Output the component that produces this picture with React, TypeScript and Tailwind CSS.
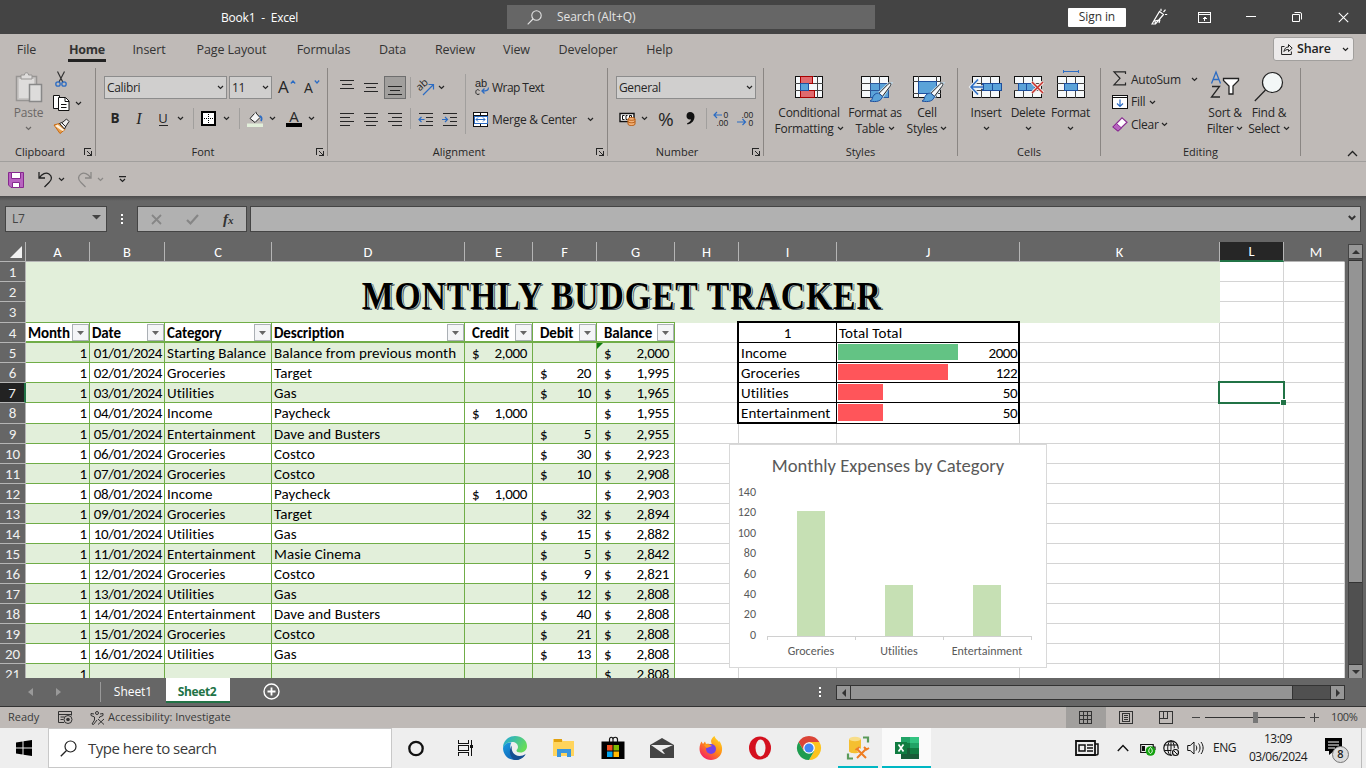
import React from "react";

type Kids = { children?: React.ReactNode };

/* ---------- small shared pieces ---------- */

function Ico({ w, h, className = "", crisp = false, children }: Kids & { w: number; h: number; className?: string; crisp?: boolean }) {
  return (
    <svg width={w} height={h} viewBox={`0 0 ${w} ${h}`} fill="none" className={`block shrink-0 overflow-visible ${className}`} shapeRendering={crisp ? "crispEdges" : "auto"}>
      {children}
    </svg>
  );
}

function Chev({ className = "" }: { className?: string }) {
  return (
    <Ico w={7} h={5} className={className}>
      <path d="M1 1l2.500 2.500L6 1" stroke="currentColor" strokeWidth="1.200" />
    </Ico>
  );
}

function Launcher() {
  return (
    <Ico w={9} h={9} crisp className="text-[#262626]">
      <path d="M0.500 7V0.500H7" stroke="currentColor" />
      <path d="M3 3l4 4" stroke="currentColor" shapeRendering="auto" />
      <path d="M3 7.500h4.500V3" stroke="currentColor" />
    </Ico>
  );
}

function Lines({ rows }: { rows: [number, number, number][] }) {
  return (
    <Ico w={16} h={16} crisp>
      {rows.map(([y, a, b]) => (
        <path key={y} d={`M${a} ${y + 0.5}H${b}`} stroke="#262626" />
      ))}
    </Ico>
  );
}

function Group({ w, label, labelPad = "", launcher = false, children }: Kids & { w: string; label: string; labelPad?: string; launcher?: boolean }) {
  return (
    <section className={`${w} flex h-[88px] shrink-0 flex-col border-r border-[#8a8683]`}>
      <div className="h-[76px]">{children}</div>
      <div className="flex h-[14px] items-center">
        <div className={`grow pt-[5px] text-center text-[11px] leading-[14px] ${labelPad}`}>{label}</div>
        {launcher && (
          <div className="-ml-3 mr-[2px] mt-[6px]">
            <Launcher />
          </div>
        )}
      </div>
    </section>
  );
}

function Combo({ w, children }: Kids & { w: string }) {
  return (
    <div className={`${w} flex h-[23px] shrink-0 items-center justify-between border border-[#8c8c8c] bg-[#d0cfce] pl-[2px] pr-[2px] text-[12px] tracking-[-0.35px] text-[#262626]`}>
      <span>{children}</span>
      <Chev />
    </div>
  );
}

function Slot({ w, children }: Kids & { w: string }) {
  return <div className={`${w} flex shrink-0 items-center justify-center`}>{children}</div>;
}

function Big({ w, icon, a, b, dim = false }: { w: string; icon: React.ReactNode; a: string; b?: string; dim?: boolean }) {
  return (
    <div className={`${w} flex shrink-0 flex-col items-center whitespace-nowrap text-[12px] tracking-[-0.25px] ${dim ? "text-[#6b6866]" : ""}`}>
      <div className="flex h-[37px] items-center justify-center">{icon}</div>
      <div className="h-[16px] leading-[16px]">{a}</div>
      <div className="flex h-[16px] items-center gap-[3px] leading-[16px]">
        {b && <span>{b}</span>}
        <Chev className="-mt-px" />
      </div>
    </div>
  );
}

/* ---------- title bar and tabs ---------- */

function TitleBar() {
  return (
    <header className="flex h-[34px] items-center bg-[#444444] text-[12px] text-white">
      <div className="w-[507px] pl-[221px] pt-px text-[12px] tracking-[-0.2px]">
        <span className="whitespace-pre">Book1  -  Excel</span>
      </div>
      <div className="flex h-6 w-[368px] items-center bg-[#666666] pl-5 text-[#e3e3e3]">
        <Ico w={15} h={15}>
          <circle cx="9.500" cy="5.500" r="4.700" stroke="#e3e3e3" strokeWidth="1.100" />
          <path d="M6 9L0.700 14.300" stroke="#e3e3e3" strokeWidth="1.100" />
        </Ico>
        <span className="ml-[15px] tracking-[-0.05px]">Search (Alt+Q)</span>
      </div>
      <div className="ml-[193px] flex h-[19px] w-[58px] items-center justify-center rounded-[1px] bg-white text-[12px] tracking-[-0.1px] text-[#333]">Sign in</div>
      <Ico w={18} h={18} className="ml-[24px]">
        <path d="M2 16L9.500 3.500l4 3L5.500 16zM5.500 16l-.5-3 4-1M9 15l1-3.500" stroke="white" strokeWidth="1.200" />
        <path d="M11 3V.8M13.500 4l2-2.400M15 6.500h2.200" stroke="white" strokeWidth="1.200" />
      </Ico>
      <Ico w={13} h={11} crisp className="ml-[30px]">
        <path d="M.5.5h12v10H.5zM0 2.500h13M6.500 9V5M4.500 6.500h4M5.500 5.500h2" stroke="white" />
      </Ico>
      <Ico w={10} h={10} crisp className="ml-[35px]"><path d="M0 4.500h10" stroke="white" /></Ico>
      <Ico w={10} h={10} className="ml-[36px]">
        <path d="M.5 2.500h7v7h-7z" stroke="white" />
        <path d="M2.500.5H8A1.500 1.500 0 0 1 9.500 2v5.500" stroke="white" />
      </Ico>
      <Ico w={11} h={11} className="ml-[36px]"><path d="M.8.8l9.400 9.400M10.200.8L.8 10.200" stroke="white" strokeWidth="1.100" /></Ico>
    </header>
  );
}

const TABS: [string, string][] = [
  ["File", "ml-[17px] w-[19px]"],
  ["Home", "ml-[32px] w-[38px]"],
  ["Insert", "ml-[27px] w-[32px]"],
  ["Page Layout", "ml-[31px] w-[71px]"],
  ["Formulas", "ml-[30px] w-[53px]"],
  ["Data", "ml-[29px] w-[27px]"],
  ["Review", "ml-[29px] w-[40px]"],
  ["View", "ml-[28px] w-[27px]"],
  ["Developer", "ml-[28px] w-[60px]"],
  ["Help", "ml-[28px] w-[27px]"],
];

function Tabs() {
  return (
    <nav className="flex h-[32px] text-[12.500px] text-[#333]">
      {TABS.map(([t, m]) => (
        <div key={t} className={`${m} flex h-[28px] shrink-0 items-center justify-center whitespace-nowrap ${t === "Home" ? "border-b-[3px] border-[#222] pt-[7px] font-bold tracking-[-0.3px]" : "pt-[4px] tracking-[-0.1px]"}`}>
          {t}
        </div>
      ))}
      <div className="ml-[600px] mt-[3px] flex h-6 w-[81px] shrink-0 items-center rounded-[3px] border border-[#a19f9d] bg-[#eceaea] pl-[7px] text-[#222]">
        <Ico w={12} h={12}>
          <path d="M3.500 3.500H.6v8h9.800V8.500M3 8.500c.3-3 2-4.500 4.500-4.500V1.500l3.700 3.700-3.700 3.300V6.500C5.500 6.500 4 7 3 8.500z" stroke="#222" />
        </Ico>
        <span className="ml-[4px] pt-px font-semibold tracking-[-0.2px]">Share</span>
        <Chev className="ml-[11px]" />
      </div>
    </nav>
  );
}

/* ---------- ribbon icons ---------- */

const dark = "#262626";
const blue = "#2b6cc4";

function GridIcon({ kind }: { kind: "cond" | "table" | "cell" | "insert" | "delete" | "format" }) {
  return (
    <Ico w={34} h={32}>
      <g shapeRendering="crispEdges">
        <path d="M3.500 5.500h27v21h-27z" fill="#f5f8fa" stroke="#111" />
        {kind !== "cell" && <path d="M3 12.500h28M3 19.500h28M12.500 5v22M21.500 5v22" stroke="#444" />}
        {kind === "cell" && <path d="M3 10.500h28M8.500 5v22M26.500 5v22M3 22.500h28" stroke="#444" />}
      </g>
      {kind === "cond" && (
        <g shapeRendering="crispEdges">
          <path d="M9 6h16v20H9z" fill="#f5f8fa" />
          <path d="M17 12.500h9M17 19.500h9M25.500 5v22M8.500 5v22" stroke="#444" />
          <path d="M8.500 5.500h12v7h-12zM8.500 19.500h14v7h-14z" fill="#e06a6e" stroke="#a80000" />
          <path d="M8.500 12.500h8v7h-8z" fill="#5ba3d9" stroke="#2050a0" />
        </g>
      )}
      {kind === "table" && <path d="M12.500 12.500h18v14h-18zM12.500 19.500h18M21.500 12.500v14" fill="#5ba3d9" stroke="#2b579a" shapeRendering="crispEdges" />}
      {kind === "cell" && <path d="M8.500 10.500h18v12h-18z" fill="#5ba3d9" stroke="#1d4f9e" shapeRendering="crispEdges" />}
      {(kind === "table" || kind === "cell") && (
        <g>
          <path d="M33 12.500l-9 14-4-3.500 11-10.500z" stroke="#bfd8ea" strokeWidth="2.500" />
          <path d="M32.500 12.300c.8.5.3 1.700-.5 3l-7.500 10-3.500-3 9-9c1-1 1.900-1.400 2.500-1z" fill="#f5f8fa" stroke="#222" />
          <path d="M20.500 22l4 3.500c-1 4.500-6 6-12.500 4.500 2.500-.8 2-2.500 3-4.500s3-3.500 5.500-3.500z" fill="#5ba3d9" stroke="#1d4f9e" />
        </g>
      )}
      {kind === "insert" && (
        <g>
          <path d="M13.500 12.500h19v7h-19zM14.500 12.500v7M23.500 12.500v7" fill="#5ba3d9" stroke="#1d4f9e" shapeRendering="crispEdges" />
          <path d="M9 8.500l-7 7.500 7 7.500M2 16h12" stroke="#e8eef2" strokeWidth="3.500" />
          <path d="M14 16H2M9 8.500L2 16l7 7.500" stroke={blue} strokeWidth="1.500" />
        </g>
      )}
      {kind === "delete" && (
        <g>
          <path d="M2 13h6v6H2z" fill="#bfbab7" />
          <path d="M7.500 12.500h16v7h-16zM15.500 12.500v7" fill="#5ba3d9" stroke="#1d4f9e" shapeRendering="crispEdges" />
          <path d="M21 11l11 11M32 11L21 22" stroke="#eee6e4" strokeWidth="3.500" />
          <path d="M21 11l11 11M32 11L21 22" stroke="#c9302c" strokeWidth="1.500" />
        </g>
      )}
      {kind === "format" && (
        <g shapeRendering="crispEdges">
          <path d="M10.500 12.500h13v7h-13z" fill="#5ba3d9" stroke="#1d4f9e" />
          <path d="M9.500 -1v3M24.500 -1v3M9 .5h16" stroke={blue} />
        </g>
      )}
    </Ico>
  );
}

/* ---------- ribbon ---------- */

function Clipboard() {
  return (
    <Group w="w-[96px]" label="Clipboard" labelPad="pr-[16px]" launcher>
      <div className="flex pl-[4px]">
        <Big
          w="w-[49px]"
          a="Paste"
          dim
          icon={
            <Ico w={28} h={31}>
              <path d="M1.500 5.500h20v24h-20z" fill="#c8c6c4" stroke="#979593" strokeWidth="1.500" />
              <path d="M4 8h15v19H4z" fill="#dedcdb" />
              <path d="M6 8V4h3.500C9 1 14 1 13.500 4H17v4z" fill="#dedcdb" stroke="#979593" />
              <path d="M14.500 13.500h12v17h-12z" fill="#dddcdb" stroke="#888" strokeWidth="1.500" />
            </Ico>
          }
        />
        <div className="flex flex-col gap-[8px] pt-[3px]">
          <Ico w={16} h={16}>
            <path d="M4.500.5l5.500 11M11.500.5L6 11" stroke="#333" strokeWidth="1.200" />
            <circle cx="5" cy="13" r="2.200" stroke={blue} strokeWidth="1.300" />
            <circle cx="11" cy="13" r="2.200" stroke={blue} strokeWidth="1.300" />
          </Ico>
          <div className="flex items-center gap-[5px]">
            <Ico w={17} h={17}>
              <path d="M.5.5h6v13h-6z" fill="#fff" stroke="#111" />
              <path d="M5.500 2.500h7l3.500 3.500v9.500H5.500z" fill="#fff" stroke="#111" />
              <path d="M12 2.500V6.500h4M8 9.500h5.500M8 12.500h5.500" stroke="#111" />
            </Ico>
            <Chev />
          </div>
          <Ico w={17} h={16} className="-mt-[2px]">
            <path d="M1 7l5.500-1.500 5.500 6-5 4z" fill="#e8a050" stroke="#c96a10" />
            <path d="M4.500 6.500l7 5.500-2 1-7.500-5z" fill="#fff3e0" />
            <path d="M6.500 5.500l5 5.500 1.500-3L16 3.500l-2.500-2.500L10 4z" fill="#eee" stroke="#222" />
            <path d="M9 5l4 4" stroke="#222" />
          </Ico>
        </div>
      </div>
    </Group>
  );
}

function VSep() {
  return <div className="h-[21px] w-px shrink-0 bg-[#a19f9d]" />;
}

function FontGroup() {
  return (
    <Group w="w-[232px]" label="Font" labelPad="pr-[18px]" launcher>
      <div className="flex items-center pl-[8px] pt-[8px]">
        <Combo w="w-[123px]">Calibri</Combo>
        <div className="w-[2px]" />
        <Combo w="w-[43px]">11</Combo>
        <span className="-mt-[2px] ml-[6px] w-[12px] text-[17px] leading-[22px]">A</span>
        <Ico w={6} h={4} className="-mt-[11px]"><path d="M.8 3.500L3 1l2.200 2.500" stroke={blue} strokeWidth="1.200" /></Ico>
        <span className="ml-[8px] w-[10px] text-[14px] leading-[21px]">A</span>
        <Ico w={6} h={4} className="-mt-[11px]"><path d="M.8.5L3 3 5.200.5" stroke={blue} strokeWidth="1.200" /></Ico>
      </div>
      <div className="mt-[9px] flex h-[21px] items-center pl-[7px] pt-0">
        <Slot w="w-[24px]"><b className="text-[13.500px]">B</b></Slot>
        <Slot w="w-[24px]"><i className="font-['Liberation_Serif',serif] text-[16px]">I</i></Slot>
        <Slot w="w-[24px]"><span className="flex h-[15px] w-[9px] justify-center border-b border-[#262626] text-[13px] leading-[14px]">U</span></Slot>
        <Slot w="w-[11px]"><Chev /></Slot>
        <div className="w-[7px]" />
        <VSep />
        <div className="w-[7px]" />
        <Ico w={15} h={15} crisp>
          <path d="M1 1h13v13H1z" fill="#fff" stroke="#000" strokeWidth="2" />
          <path d="M7.500 3v9M3 7.500h9" stroke="#000" strokeDasharray="1 1" />
        </Ico>
        <div className="w-[7px]" />
        <Chev />
        <div className="w-[9px]" />
        <VSep />
        <div className="w-[7px]" />
        <Ico w={17} h={16}>
          <path d="M0 12.500h16v3.500H0z" fill="#e2efda" />
          <path d="M7.500 2.500L3 7.500l5 4 5-5-4-4.500V.8" fill="#f5f5f5" stroke="#222" />
          <path d="M12.500 5c2.500.5 2.500 3 1.500 5" stroke={blue} strokeWidth="1.800" />
        </Ico>
        <Chev className="ml-[5px]" />
        <div className="ml-[10px] flex w-[16px] flex-col items-center">
          <span className="h-[12px] text-[15px] leading-[11px]">A</span>
          <div className="h-[4px] w-[16px] bg-black" />
        </div>
        <Chev className="ml-[6px]" />
      </div>
    </Group>
  );
}

function Alignment() {
  return (
    <Group w="w-[280px]" label="Alignment" labelPad="pr-[18px]" launcher>
      <div className="flex">
        <div className="pl-[7px]">
          <div className="mt-[8px] flex h-[23px] items-center">
            <Slot w="w-[24px]"><Lines rows={[[0, 1, 15], [4, 3, 13], [8, 1, 15]]} /></Slot>
            <Slot w="w-[24px]"><Lines rows={[[3, 1, 15], [7, 3, 13], [11, 1, 15]]} /></Slot>
            <Slot w="w-[24px]">
              <div className="flex h-[23px] w-[22px] items-center justify-center border border-[#6e6e6e] bg-[#a19f9d]">
                <Lines rows={[[6, 1, 15], [10, 3, 13], [14, 1, 15]]} />
              </div>
            </Slot>
            <div className="w-[3px]" />
            <VSep />
            <div className="ml-[7px]">
              <Ico w={17} h={17}>
                <text x="0" y="10" fontSize="10.500" fill={dark} fontFamily="Open Sans" transform="rotate(-42 4 9)">ab</text>
                <path d="M5 16L15 6M10.500 5.500H15.500V10.500" stroke={blue} strokeWidth="1.200" />
              </Ico>
            </div>
            <Chev className="ml-[3px]" />
          </div>
          <div className="mt-[9px] flex h-[21px] items-center">
            <Slot w="w-[24px]"><Lines rows={[[2, 1, 15], [6, 1, 11], [10, 1, 15], [14, 1, 11]]} /></Slot>
            <Slot w="w-[24px]"><Lines rows={[[2, 1, 15], [6, 3, 13], [10, 1, 15], [14, 3, 13]]} /></Slot>
            <Slot w="w-[24px]"><Lines rows={[[2, 1, 15], [6, 5, 15], [10, 1, 15], [14, 5, 15]]} /></Slot>
            <div className="w-[3px]" />
            <VSep />
            <div className="ml-[7px] flex gap-[8px]">
              <Ico w={16} h={14}>
                <path d="M1 1.500h14M8 5.500h7M8 9.500h7M1 13.500h14" stroke={dark} shapeRendering="crispEdges" />
                <path d="M6.500 7.500H1M3.500 5L1 7.500 3.500 10" stroke={blue} strokeWidth="1.200" />
              </Ico>
              <Ico w={16} h={14}>
                <path d="M1 1.500h14M8 5.500h7M8 9.500h7M1 13.500h14" stroke={dark} shapeRendering="crispEdges" />
                <path d="M0 7.500h5.500M3 5l2.500 2.500L3 10" stroke={blue} strokeWidth="1.200" />
              </Ico>
            </div>
          </div>
        </div>
        <div className="ml-[7px] mt-[6px] h-[60px] w-px bg-[#a19f9d]" />
        <div className="flex flex-col whitespace-nowrap pl-[7px] text-[12px] tracking-[-0.3px]">
          <div className="mt-[8px] flex h-[23px] items-center gap-[2px] pl-[2px] tracking-[-0.55px]">
            <Ico w={15} h={17}>
              <text x="0" y="7.500" fontSize="11" fill={dark} fontFamily="Liberation Sans" letterSpacing="0">ab</text>
              <path d="M4.500 11.500C2 9.500.8 11.500.8 13.200s1.500 3 3.700 1.800" stroke={dark} />
              <path d="M13.500 8.500c0 3-2 3.500-6.500 3.500M9.500 9.500L7 12l2.500 2.500" stroke={blue} strokeWidth="1.300" />
            </Ico>
            Wrap Text
          </div>
          <div className="mt-[10px] flex h-[21px] items-center gap-[4px] tracking-[-0.25px]">
            <Ico w={15} h={15} crisp className="-mt-px">
              <path d="M.5.5h14v14H.5zM.5 3.500h14M.5 11.500h14M7.500.5v3M7.500 11.500v3" fill="#fff" stroke="#111" />
              <path d="M1 4h13v7H1z" fill="#fff" stroke={blue} />
              <path d="M3 7.500h9M5 5.500L3 7.500l2 2M10 5.500l2 2-2 2" stroke={blue} shapeRendering="auto" />
            </Ico>
            Merge &amp; Center
            <Chev className="ml-[6px]" />
          </div>
        </div>
      </div>
    </Group>
  );
}

function NumberGroup() {
  return (
    <Group w="w-[156px]" label="Number" labelPad="pr-[18px]" launcher>
      <div className="pl-[8px] pt-[8px]"><Combo w="w-[140px]">General</Combo></div>
      <div className="mt-[9px] flex h-[21px] items-center pl-[11px]">
        <Ico w={17} h={15}>
          <path d="M1 2.500h14v8H1z" fill="#fff" stroke="#111" strokeWidth="1.400" />
          <path d="M5.500 4.500H3.500v4h2M8.500 4.500H7v4h1.500M10.500 8v-3.500h2V8" stroke="#111" />
          <path d="M9 8c0-2 7-2 7 0v5c0 2-7 2-7 0z" fill="#f3b27a" stroke="#b55a10" />
          <path d="M9 8c0 1.700 7 1.700 7 0M9 10.500c0 1.700 7 1.700 7 0" stroke="#b55a10" />
        </Ico>
        <Slot w="w-[17px]"><Chev /></Slot>
        <div className="ml-[5px] w-[18px] text-[19px] leading-[20px] tracking-[-1px]">%</div>
        <Ico w={9} h={13} className="ml-[10px]">
          <path d="M4 0c2.700 0 4.500 1.600 4.500 4.500C8.500 8.500 6 11.500 1.500 12.500L1 11.300C3.500 10.500 4.800 9 5 7.300 2.500 8 .5 6.500.5 4S2 0 4 0z" fill="#111" />
        </Ico>
        <div className="w-[11px]" />
        <VSep />
        <div className="ml-[6px] flex gap-[7px]">
          <Ico w={17} h={17}>
            <text x="10.500" y="7.500" fontSize="8.500" fill={dark} fontFamily="Liberation Sans">0</text>
            <text x="3.500" y="16" fontSize="8.500" fill={dark} fontFamily="Liberation Sans">.00</text>
            <path d="M9 5H1M4 2L1 5l3 3" stroke={blue} strokeWidth="1.200" />
          </Ico>
          <Ico w={17} h={17}>
            <text x="4.500" y="7.500" fontSize="8.500" fill={dark} fontFamily="Liberation Sans">.00</text>
            <text x="11.500" y="16" fontSize="8.500" fill={dark} fontFamily="Liberation Sans">0</text>
            <path d="M0 12h8.500M5.500 9l3 3-3 3" stroke={blue} strokeWidth="1.200" />
          </Ico>
        </div>
      </div>
    </Group>
  );
}

function Editing() {
  return (
    <Group w="w-[200px]" label="Editing">
      <div className="flex">
        <div className="flex w-[102px] flex-col whitespace-nowrap pl-[11px] text-[12px] tracking-[-0.25px]">
          <div className="flex h-[23px] items-center">
            <Ico w={16} h={15} className="-mt-[2px]"><path d="M13.500 3V.8H2l6 6.500-6 6.500h11.500V11.500" stroke={dark} strokeWidth="1.200" /></Ico>
            <span className="ml-[3px] w-[51px]">AutoSum</span>
            <Chev className="ml-[9px] -mt-px" />
          </div>
          <div className="flex h-[22px] items-center">
            <Ico w={16} h={14} crisp>
              <path d="M.5.5h15v13H.5zM.5 2.500h15" fill="#fff" stroke="#111" />
              <path d="M8 4.500v7M5 8.500l3 3 3-3" stroke={blue} shapeRendering="auto" strokeWidth="1.200" />
            </Ico>
            <span className="ml-[3px] w-[18px]">Fill</span>
            <Chev />
          </div>
          <div className="flex h-[23px] items-center">
            <Ico w={16} h={15}>
              <path d="M1 10L10 .8l5 4.500L6 14z" fill="#fff" stroke="#8a2d93" strokeWidth="1.200" />
              <path d="M1 10l3.500-3.500 5 4.500L6 14z" fill="#b863c0" stroke="#8a2d93" />
            </Ico>
            <span className="ml-[3px] w-[30px]">Clear</span>
            <Chev />
          </div>
        </div>
        <Big
          w="w-[44px]"
          a="Sort &amp;"
          b="Filter"
          icon={
            <Ico w={30} h={28} className="-mt-[3px]">
              <path d="M1.500 12.500L6 1l4.500 11.500M3 8.500h6" stroke={blue} strokeWidth="1.300" />
              <path d="M2 15.500h7.500L1.500 26h8.500" stroke={dark} strokeWidth="1.300" />
              <path d="M13.500 7.500h15v2L23 15v8h-4v-8l-5.500-5.500z" fill="#fff" stroke="#222" strokeWidth="1.300" />
            </Ico>
          }
        />
        <Big
          w="w-[44px]"
          a="Find &amp;"
          b="Select"
          icon={
            <Ico w={30} h={31}>
              <circle cx="18.500" cy="11.500" r="10" fill="#f3f7f7" stroke="#222" strokeWidth="1.200" />
              <path d="M11.500 19L.8 30" stroke="#222" strokeWidth="1.200" />
            </Ico>
          }
        />
      </div>
    </Group>
  );
}

function Ribbon() {
  return (
    <div className="flex h-[96px] border-b border-[#a19f9d] pt-[2px] text-[#262626]">
      <Clipboard />
      <FontGroup />
      <Alignment />
      <NumberGroup />
      <Group w="w-[194px]" label="Styles">
        <div className="flex pl-[9px]">
          <Big w="w-[72px]" icon={<GridIcon kind="cond" />} a="Conditional" b="Formatting" />
          <Big w="w-[60px]" icon={<GridIcon kind="table" />} a="Format as" b="Table" />
          <Big w="w-[44px]" icon={<GridIcon kind="cell" />} a="Cell" b="Styles" />
        </div>
      </Group>
      <Group w="w-[143px]" label="Cells">
        <div className="flex pl-[7px]">
          <Big w="w-[42px]" icon={<GridIcon kind="insert" />} a="Insert" />
          <Big w="w-[42px]" icon={<GridIcon kind="delete" />} a="Delete" />
          <Big w="w-[43px]" icon={<GridIcon kind="format" />} a="Format" />
        </div>
      </Group>
      <Editing />
      <Ico w={11} h={7} className="ml-[46px] mt-[82px]"><path d="M1 6l4.500-4.500L10 6" stroke="#222" strokeWidth="1.300" /></Ico>
    </div>
  );
}

function QuickAccess() {
  return (
    <div className="flex h-[34px] items-center pl-[8px] pt-[1px] text-[#262626]">
      <Ico w={16} h={16}>
        <path d="M.5.5h15v15H3L.5 13z" fill="#b863c0" stroke="#86288f" />
        <path d="M3.500.5h9v6h-9z" fill="#fff" stroke="#86288f" />
        <path d="M4.500 10.500h7v5h-7z" fill="#fff" stroke="#86288f" />
      </Ico>
      <Ico w={15} h={17} className="ml-[14px]"><path d="M1 1v6h6M1.200 7C4 2.500 8 1 11 3s3.500 5.500 0 8.500L6.500 16" stroke="#222" strokeWidth="1.300" /></Ico>
      <Chev className="ml-[5px] -mt-px" />
      <Ico w={15} h={17} className="ml-[12px]"><path d="M14 1v6H8M13.800 7C11 2.500 7 1 4 3s-3.500 5.500 0 8.500L8.500 16" stroke="#8a8886" strokeWidth="1.300" /></Ico>
      <Chev className="ml-[5px] -mt-px text-[#8a8886]" />
      <Ico w={7} h={7} className="ml-[15px]"><path d="M0 .6h7M1 3l2.500 2.500L6 3" stroke="#222" strokeWidth="1.200" /></Ico>
    </div>
  );
}

function FormulaBar() {
  return (
    <div className="flex h-[46px] bg-[#666666] bg-[linear-gradient(#4b4b4b_0px,#666666_5px)] pl-[5px] pt-[10px]">
      <div className="flex h-[26px] w-[102px] items-center justify-between border border-[#444] bg-[#b1b1b1] pl-[6px] pr-[5px] text-[12px] tracking-[-0.3px] text-[#444]">
        L7
        <Ico w={9} h={5} className="-mt-[3px]"><path d="M0 0h9L4.500 4.500z" fill="#444" /></Ico>
      </div>
      <Ico w={2} h={12} crisp className="ml-[14px] mt-[8px]"><path d="M0 0h2v2H0zM0 4h2v2H0zM0 8h2v2H0z" fill="#fff" /></Ico>
      <div className="ml-[14px] flex h-[26px] w-[110px] items-center border border-[#444] bg-[#b1b1b1]">
        <Ico w={11} h={11} className="ml-[13px]"><path d="M1 1l9 9M10 1l-9 9" stroke="#868686" strokeWidth="1.800" /></Ico>
        <Ico w={13} h={11} className="ml-[24px]"><path d="M1 6l3.500 3.500L12 1" stroke="#868686" strokeWidth="2.200" /></Ico>
        <span className="ml-[24px] font-['Liberation_Serif',serif] text-[15px] font-bold italic leading-none text-[#333]">f<span className="text-[11px]">x</span></span>
      </div>
      <div className="ml-[3px] flex h-[26px] w-[1111px] items-center justify-end border border-[#444] bg-[#b1b1b1] pr-[4px]">
        <Ico w={8} h={6} className="-mt-[2px]"><path d="M.8 1L4 4.200 7.200 1" stroke="#333" strokeWidth="2" /></Ico>
      </div>
    </div>
  );
}

/* ---------- worksheet ---------- */

const COLS: [string, string][] = [
  ["A", "w-[64px]"], ["B", "w-[75px]"], ["C", "w-[107px]"], ["D", "w-[193px]"], ["E", "w-[68px]"], ["F", "w-[64px]"], ["G", "w-[78px]"],
  ["H", "w-[64px]"], ["I", "w-[98px]"], ["J", "w-[183px]"], ["K", "w-[200px]"], ["L", "w-[64px]"], ["M", "w-[61px]"],
];

type Entry = [string, string, string, string, string, string];
const ENTRIES: Entry[] = [
  ["01/01/2024", "Starting Balance", "Balance from previous month", "2,000", "", "2,000"],
  ["02/01/2024", "Groceries", "Target", "", "20", "1,995"],
  ["03/01/2024", "Utilities", "Gas", "", "10", "1,965"],
  ["04/01/2024", "Income", "Paycheck", "1,000", "", "1,955"],
  ["05/01/2024", "Entertainment", "Dave and Busters", "", "5", "2,955"],
  ["06/01/2024", "Groceries", "Costco", "", "30", "2,923"],
  ["07/01/2024", "Groceries", "Costco", "", "10", "2,908"],
  ["08/01/2024", "Income", "Paycheck", "1,000", "", "2,903"],
  ["09/01/2024", "Groceries", "Target", "", "32", "2,894"],
  ["10/01/2024", "Utilities", "Gas", "", "15", "2,882"],
  ["11/01/2024", "Entertainment", "Masie Cinema", "", "5", "2,842"],
  ["12/01/2024", "Groceries", "Costco", "", "9", "2,821"],
  ["13/01/2024", "Utilities", "Gas", "", "12", "2,808"],
  ["14/01/2024", "Entertainment", "Dave and Busters", "", "40", "2,808"],
  ["15/01/2024", "Groceries", "Costco", "", "21", "2,808"],
  ["16/01/2024", "Utilities", "Gas", "", "13", "2,808"],
  ["", "", "", "", "", "2,808"],
];

const HEADS = ["Month", "Date", "Category", "Description", "Credit", "Debit", "Balance"];
const HEAD_PAD = ["pl-[2px]", "pl-[2px]", "pl-[2px]", "pl-[2px]", "pl-[7px]", "pl-[7px]", "pl-[7px]"];
const SUMMARY: [string, string, string][] = [
  ["Income", "2000", "h-[16px] w-[120px] bg-[#63c384]"],
  ["Groceries", "122", "h-[16px] w-[110px] bg-[#ff555a]"],
  ["Utilities", "50", "h-[16px] w-[45px] bg-[#ff555a]"],
  ["Entertainment", "50", "h-[17px] w-[45px] bg-[#ff555a]"],
];

function rowH(n: number) {
  return n === 3 || n === 8 ? "h-[21px]" : "h-[20px]";
}

function Money({ v }: { v: string }) {
  return v ? (
    <div className="flex w-full justify-between pl-[7px] pr-[5px] tracking-[-0.35px]">
      <span>$</span>
      <span>{v}</span>
    </div>
  ) : null;
}

function SummaryCell({ n, col }: { n: number; col: number }) {
  if (n === 4) return col === 8 ? <div className="w-full text-center">1</div> : <span className="pl-[2px] tracking-[0.1px]">Total Total</span>;
  const [name, val, bar] = SUMMARY[n - 5];
  if (col === 8) return <span className="pl-[2px] tracking-[0.1px]">{name}</span>;
  return (
    <div className="flex h-full w-full items-center justify-between pl-px pr-[2px] tracking-[-0.5px]">
      <div className={`mt-px self-start ${bar}`} />
      <span>{val}</span>
    </div>
  );
}

function cellContent(n: number, c: number): React.ReactNode {
  if (c >= 8 && c <= 9 && n >= 4 && n <= 8) return <SummaryCell n={n} col={c} />;
  if (c > 6 || n > 100) return null;
  if (n === 4)
    return (
      <div className={`flex w-full items-center justify-between font-bold tracking-[-0.1px] ${HEAD_PAD[c]}`}>
        <span className="pt-px">{HEADS[c]}</span>
        <div className="mt-px flex h-[17px] w-[17px] shrink-0 items-center justify-center border border-[#abb0b5] bg-[#f4f5f7]">
          <Ico w={7} h={4}><path d="M0 0h7L3.500 4z" fill="#666" /></Ico>
        </div>
      </div>
    );
  const e = ENTRIES[n - 5];
  if (c === 0) return <div className="w-full pr-[2px] text-right">1</div>;
  if (c === 1) return <div className="w-full pr-[2px] text-right tracking-[-0.42px]">{e[0]}</div>;
  if (c < 4) return <span className={`whitespace-nowrap pl-[2px] ${c === 2 ? "tracking-[0.03px]" : "tracking-[0.08px]"}`}>{e[c - 1]}</span>;
  return <Money v={e[c - 1]} />;
}

function Cell({ n, c }: { n: number; c: number }) {
  const table = c <= 6;
  const sum = c >= 8 && c <= 9 && n >= 4 && n <= 8;
  const line = table
    ? n === 4 ? "border-r border-b-2 border-[#70ad47]" : "border-r border-b border-[#70ad47]"
    : sum
      ? "border-r border-b border-black"
      : "border-r border-b border-[#d4d4d4]";
  const fill = table && n % 2 === 1 ? "bg-[#e2efda]" : "bg-white";
  return <div className={`${COLS[c][1]} flex h-full shrink-0 items-center overflow-hidden ${line} ${fill}`}>{cellContent(n, c)}</div>;
}

function RowHead({ n }: { n: number }) {
  return (
    <div className={`${rowH(n)} flex w-[26px] shrink-0 items-center justify-center border-b border-r border-[#b5b5b5] text-[15px] tracking-[-0.2px] text-[#f0f0f0] ${n === 7 ? "border-r-2 border-r-[#217346] bg-[#222]" : "bg-[#666]"}`}>
      {n}
    </div>
  );
}

const AXIS = ["140", "120", "100", "80", "60", "40", "20", "0"];
const BARS = [
  { name: "Groceries", value: 122 },
  { name: "Utilities", value: 50 },
  { name: "Entertainment", value: 50 },
];

function ExpenseChart() {
  return (
    <div className="absolute left-[729px] top-[202px] h-[224px] w-[318px] border border-[#d9d9d9] bg-white text-[#595959]">
      <div className="pl-0 pt-[10px] text-center text-[18.670px] leading-[22px]">Monthly Expenses by Category</div>
      <div className="flex pt-[5px]">
        <div className="flex w-[26px] flex-col text-right text-[12px]">
          {AXIS.map((a) => (
            <div key={a} className="h-[20.400px] leading-[20.400px]">{a}</div>
          ))}
        </div>
        <div className="ml-[11px] mt-[11px]">
          <div className="flex h-[144px] items-end border-b border-[#d0d0d0]">
            {BARS.map((b) => (
              <div key={b.name} className="flex w-[88px] justify-center">
                <div className="w-[28px] bg-[#c6e0b4]" style={{ height: Math.round((b.value / 140) * 143) }} />
              </div>
            ))}
          </div>
          <div className="flex h-[3px] w-[265px] justify-between">
            {[0, 1, 2, 3].map((i) => (
              <div key={i} className="w-px bg-[#d0d0d0]" />
            ))}
          </div>
          <div className="flex text-[12px] leading-[22px]">
            {BARS.map((b) => (
              <div key={b.name} className="w-[88px] text-center">{b.name}</div>
            ))}
          </div>
        </div>
      </div>
    </div>
  );
}

function Sheet() {
  const rows = Array.from({ length: 18 }, (_, i) => i + 4);
  return (
    <div className="relative h-[437px] w-[1345px] overflow-hidden font-['Carlito',Lato,sans-serif] text-[15px] leading-[18px] text-black [font-variant-ligatures:none]">
      <div className="flex h-[20px] bg-[#666] text-[14.500px] text-white">
        <div className="flex w-[26px] items-end justify-end border-b border-r border-[#b5b5b5] pb-[3px] pr-[3px]">
          <Ico w={12} h={12}><path d="M12 0v12H0z" fill="#f2f2f2" /></Ico>
        </div>
        {COLS.map(([k, w]) => (
          <div key={k} className={`${w} flex shrink-0 items-center justify-center border-r ${k === "M" ? "border-r-transparent pl-[4px]" : "border-r-[#b5b5b5]"} ${k === "L" ? "border-b-2 border-b-[#217346] bg-[#262626]" : "border-b border-b-[#b5b5b5]"}`}>
            {k}
          </div>
        ))}
      </div>
      <div className="flex h-[61px]">
        <div>
          {[1, 2, 3].map((n) => <RowHead key={n} n={n} />)}
        </div>
        <div className="flex w-[1194px] items-center justify-center border-b border-[#e2efda] bg-[#e2efda] pr-[2px] pt-[7px]">
          <div className="scale-x-[0.845] whitespace-nowrap font-['Liberation_Serif',serif] text-[40px] font-bold leading-none tracking-[1px] [text-shadow:1px_0_0_#e2efda,2px_1px_0_#4a5560]">MONTHLY BUDGET TRACKER</div>
        </div>
        <div>
          {[1, 2, 3].map((n) => (
            <div key={n} className={`${rowH(n)} flex`}>
              <Cell n={n + 100} c={11} />
              <Cell n={n + 100} c={12} />
            </div>
          ))}
        </div>
      </div>
      {rows.map((n) => (
        <div key={n} className={`${rowH(n)} flex`}>
          <RowHead n={n} />
          {COLS.map(([k], c) => <Cell key={k} n={n} c={c} />)}
        </div>
      ))}
      <div className="absolute left-[26px] top-[80px] h-px w-[649px] bg-[#70ad47]" />
      <Ico w={6} h={6} className="absolute left-[597px] top-[101px]"><path d="M0 0h6L0 6z" fill="#107c10" /></Ico>
      <div className="absolute left-[737px] top-[79px] h-[103px] w-[283px] border-2 border-b border-black" />
      <div className="absolute left-[738px] top-[180px] h-[2px] w-[99px] bg-black" />
      <div className="absolute left-[1218px] top-[139px] h-[23px] w-[67px] border-2 border-[#217346]" />
      <div className="absolute left-[1280px] top-[157px] h-[6px] w-[6px] border-l border-t border-white bg-[#217346]" />
      <ExpenseChart />
    </div>
  );
}

function Arrow({ d }: { d: string }) {
  return <Ico w={8} h={8}><path d={d} fill="#333" /></Ico>;
}

function VScroll() {
  return (
    <div className="ml-[3px] mt-[2px] flex h-[435px] w-[15px] flex-col border border-[#444] bg-[#505050]">
      <div className="flex h-[14px] items-center justify-center border-b border-[#444] bg-[#979797]"><Arrow d="M0 6h8L4 2z" /></div>
      <div className="mt-px h-[323px] border-b border-t border-[#333] bg-[#949494]" />
      <div className="mt-auto flex h-[14px] items-center justify-center border-t border-[#333] bg-[#979797]"><Arrow d="M0 2h8L4 6z" /></div>
    </div>
  );
}

function SheetTabs() {
  return (
    <div className="flex h-[29px] items-start border-b border-[#333] bg-[#666] text-[12px] text-white">
      <Ico w={5} h={8} className="ml-[28px] mt-[10px]"><path d="M5 0v8L0 4z" fill="#999" /></Ico>
      <Ico w={5} h={8} className="ml-[23px] mt-[10px]"><path d="M0 0v8l5-4z" fill="#999" /></Ico>
      <div className="ml-[39px] mt-[4px] h-[20px] w-px bg-[#999]" />
      <div className="w-[64px] text-center leading-[27px] tracking-[-0.05px]">Sheet1</div>
      <div className="ml-[1px] h-[25px] w-[64px] border-b-2 border-[#217346] bg-white pr-[2px] text-center font-bold leading-[27px] tracking-[-0.35px] text-[#217346]">Sheet2</div>
      <Ico w={17} h={17} className="ml-[33px] mt-[5px]">
        <circle cx="8.500" cy="8.500" r="7.500" stroke="#fff" strokeWidth="1.400" />
        <path d="M8.500 4.500v8M4.500 8.500h8" stroke="#fff" strokeWidth="1.800" />
      </Ico>
      <Ico w={2} h={12} crisp className="ml-[539px] mt-[9px]"><path d="M0 0h2v2H0zM0 4h2v2H0zM0 8h2v2H0z" fill="#fff" /></Ico>
      <div className="ml-[15px] mt-[7px] flex h-[15px] w-[509px] border border-[#333] bg-[#505050]">
        <div className="flex w-[14px] items-center justify-center border-r border-[#333] bg-[#979797]"><Arrow d="M6 0v8L2 4z" /></div>
        <div className="w-[442px] border-r border-[#333] bg-[#949494]" />
        <div className="ml-auto flex w-[14px] items-center justify-center border-l border-[#333] bg-[#979797]"><Arrow d="M2 0v8l4-4z" /></div>
      </div>
    </div>
  );
}

function StatusBar() {
  return (
    <div className="flex h-[21px] items-center bg-[#bfbab7] text-[11px] text-[#3a3a3a]">
      <span className="ml-[8px] w-[32px]">Ready</span>
      <Ico w={15} h={13} className="ml-[18px]">
        <path d="M6 11.500H.5V.5h13v4M.5 3.500h13M2.500 6h4M2.500 8.500h3" stroke="#333" />
        <circle cx="10" cy="8.500" r="4" stroke="#333" /><circle cx="10" cy="8.500" r="1.800" fill="#333" />
      </Ico>
      <Ico w={15} h={14} className="ml-[17px]">
        <circle cx="7" cy="2" r="1.500" stroke="#333" />
        <path d="M4 3L1 2.500v2L4.500 6v3L2 13l1.500.5L7 9M10 3l3-.5v2L9.500 6v1M8 8l6 5.500M14 8l-6 5.500" stroke="#333" />
      </Ico>
      <span className="ml-[3px] tracking-[0px]">Accessibility: Investigate</span>
      <div className="grow" />
      <div className="flex h-full w-[40px] items-center justify-center bg-[#a19f9d]">
        <Ico w={13} h={13} crisp className="mr-px"><path d="M.5.5h12v12H.5zM.5 4.500h12M.5 8.500h12M4.500.5v12M8.500.5v12" stroke="#333" /></Ico>
      </div>
      <Slot w="w-[40px]"><Ico w={14} h={13} crisp><path d="M.5.5h13v12H.5zM3.500 2.500h7v8h-7zM5 4.500h4M5 6.500h4M5 8.500h4" stroke="#333" /></Ico></Slot>
      <Slot w="w-[40px]"><Ico w={14} h={13} crisp><path d="M.5.5h13v12H.5zM.5 7.500h8v-7M4.500.5v7" stroke="#333" /></Ico></Slot>
      <div className="ml-[6px] h-px w-[8px] bg-[#444]" />
      <div className="ml-[5px] flex h-[11px] w-[100px] items-center bg-[linear-gradient(#333,#333)] bg-[length:100%_1px] bg-center bg-no-repeat">
        <div className="ml-[48px] h-[11px] w-[5px] bg-[#777]" />
      </div>
      <Ico w={9} h={9} crisp className="ml-[5px]"><path d="M4.500 0v9M0 4.500h9" stroke="#444" /></Ico>
      <span className="ml-[12px] w-[35px] text-[11px] tracking-[-0.4px]">100%</span>
    </div>
  );
}

/* ---------- taskbar ---------- */

function EdgeIcon() {
  return (
    <Ico w={24} h={24}>
      <defs>
        <linearGradient id="eg" x1="0" y1="0" x2="1" y2=".5"><stop offset="0" stopColor="#1ea6df" /><stop offset="1" stopColor="#66dc5a" /></linearGradient>
        <linearGradient id="eb" x1="0" y1="0" x2="1" y2="1"><stop offset="0" stopColor="#1b9de2" /><stop offset="1" stopColor="#0c4fa5" /></linearGradient>
      </defs>
      <path d="M0 12C0 5 5.500 0 12 0c7 0 12 4.500 12 10 0 4-3 6.500-6.500 6.500-3 0-4-1-4-2s1.500-1.500 1.500-3.500C15 8 12.500 6 9 6 4 6 1 9 0 12z" fill="url(#eg)" />
      <path d="M0 12C1 8.500 4.500 6 8.500 6.500 6 9 7.500 19 13 21c3 1 6.500 0 9-2.500C20 22 16.500 24 12 24 5 24 0 18.500 0 12z" fill="url(#eb)" />
      <path d="M9 9.500c-1.500 5 2 10.500 7.500 10.500 2.500 0 4.500-.7 6.200-2-2 4-6.200 6-10.700 6-5-1.500-7-9.500-3-14.500z" fill="#164f92" />
    </Ico>
  );
}

function ExplorerIcon() {
  return (
    <Ico w={22} h={20}>
      <path d="M0 1h8l2 2h11v15H0z" fill="#ffd45c" /><path d="M1 1h8v3H1z" fill="#e0a010" />
      <path d="M4 11h14v8h-4v-4H8v4H4z" fill="#3a96dd" />
    </Ico>
  );
}

function StoreIcon() {
  return (
    <Ico w={24} h={24}>
      <path d="M8.500 6V3.500c0-3 3.500-3 3.500 0V6M12 6V3.500c0-3 4.500-3 4.500 0V6" stroke="#111" strokeWidth="1.200" />
      <path d="M.5 5.500h23V23h-23z" fill="#000" />
      <path d="M6 9h5.500v5.500H6z" fill="#f25022" /><path d="M12.500 9H18v5.500h-5.500z" fill="#7fba00" />
      <path d="M6 15.500h5.500V21H6z" fill="#00a4ef" /><path d="M12.500 15.500H18V21h-5.500z" fill="#ffb900" />
    </Ico>
  );
}

function FirefoxIcon() {
  return (
    <Ico w={24} h={24}>
      <defs><linearGradient id="ff" x1=".9" y1="0" x2=".2" y2="1"><stop offset="0" stopColor="#ffe226" /><stop offset=".5" stopColor="#ff8a16" /><stop offset="1" stopColor="#f5156c" /></linearGradient></defs>
      <path d="M2.500 5.500L4 8l2-2.500 1 2.500c2-.5 4.500 0 6 1.500L12 5c.5-2 1.500-4 3.500-5 .5 2.500 3 4 4.500 6l.5-1c2 3.500 3 6 2.500 9.500C22.500 20 17.500 24 12 24S.5 19.500.5 13c0-3 .8-5.500 2-7.500z" fill="url(#ff)" />
      <circle cx="12" cy="13" r="5" fill="#7542e5" /><path d="M5 9c2-2 6-1 8 1-2 .5-3 1.500-5.500 2z" fill="#ff9a1f" />
    </Ico>
  );
}

function ChromeIcon() {
  return (
    <Ico w={24} h={24}>
      <path d="M12 6h10.400A12 12 0 0 1 12 24l5.200-9z" fill="#fcc31e" />
      <path d="M6.800 15L1.600 6A12 12 0 0 1 22.400 6H12z" fill="#db4437" />
      <path d="M6.800 15L1.600 6A12 12 0 0 0 12 24l5.200-9z" fill="#1e9c4f" />
      <circle cx="12" cy="12" r="5.800" fill="#fff" /><circle cx="12" cy="12" r="4.600" fill="#4285f4" />
    </Ico>
  );
}

function Taskbar() {
  const apps: React.ReactNode[] = [
    <Ico w={17} h={17}><circle cx="8" cy="8.500" r="6.700" stroke="#111" strokeWidth="2.300" /></Ico>,
    <Ico w={16} h={16} crisp><path d="M.5 0v3.500h10V0M.5 16v-3.500h10V16M.5 5.500h10v5H.5zM13.500 0v16" stroke="#111" /><path d="M12 5h3v3h-3z" fill="#111" /></Ico>,
    <EdgeIcon />,
    <ExplorerIcon />,
    <StoreIcon />,
    <Ico w={24} h={20}><path d="M0 7L12 0l12 7v13H0z" fill="#444" /><path d="M1 7h22l-11 5 3 4-2-.5z" fill="#eee" /></Ico>,
    <FirefoxIcon />,
    <Ico w={22} h={24}><ellipse cx="11" cy="12" rx="11" ry="11.500" fill="#d4101e" /><ellipse cx="11.500" cy="12" rx="5" ry="8.500" fill="#eee" /></Ico>,
    <ChromeIcon />,
    <Ico w={24} h={24}>
      <path d="M3 3v12c0 3 12 3 12 0V3z" fill="#f5bf30" /><ellipse cx="9" cy="3" rx="6" ry="2.200" fill="#f8de8a" />
      <path d="M17 1.500h5v5M7 22.500H2v-5" stroke="#5a9a5a" strokeWidth="2.200" />
      <path d="M11 12l10 10M20 13l-9 9" stroke="#eee" strokeWidth="4" />
      <path d="M11 13l9 9M20 13l-9 9" stroke="#ee7d22" strokeWidth="2" /><path d="M9.500 14l4-3M18 11l2.500 2.500L23 12" stroke="#ee7d22" strokeWidth="2" />
    </Ico>,
    <Ico w={24} h={22}>
      <path d="M6 0h18v22H6z" fill="#21a366" /><path d="M15 0h9v6h-9z" fill="#33c481" /><path d="M6 6h9v5H6z" fill="#107c41" /><path d="M15 11h9v6h-9z" fill="#107c41" /><path d="M6 11h9v11H6zM15 17h9v5h-9z" fill="#185c37" />
      <path d="M0 5h12v12H0z" fill="#107c41" /><path d="M3.500 7.500l5 7M8.500 7.500l-5 7" stroke="#fff" strokeWidth="1.700" />
    </Ico>,
  ];
  return (
    <footer className="flex h-[40px] bg-[#eeeeee] text-[#1c1c1c]">
      <Slot w="w-[48px]"><Ico w={16} h={16}><path d="M0 2.500L6.500 1.500V7.500H0zM7.500 1.300L16 0v7.500H7.500zM0 8.500h6.500v6L0 13.500zM7.500 8.500H16V16L7.500 14.700z" fill="#000" /></Ico></Slot>
      <div className="flex w-[344px] items-center border border-[#c8c8c8] bg-white pl-[11px]">
        <Ico w={17} h={17}><circle cx="10.500" cy="6.500" r="5.500" stroke="#222" strokeWidth="1.200" /><path d="M6.500 10.500L.8 16.200" stroke="#222" strokeWidth="1.300" /></Ico>
        <span className="ml-[11px] text-[15px] tracking-[-0.5px] text-[#3a3a3a]">Type here to search</span>
      </div>
      {apps.map((a, i) => (
        <div key={i} className={`flex w-[49px] shrink-0 flex-col items-center ${i === 10 ? "bg-[#fafafa]" : ""}`}>
          <div className="flex h-[38px] items-center pt-[2px]">{a}</div>
          {i > 8 && <div className={`h-[2px] bg-[#00b7c3] ${i === 10 ? "w-full" : "w-[40px]"}`} />}
        </div>
      ))}
      <div className="grow" />
      <div className="flex items-center">
        <Ico w={24} h={17}><path d="M1 1h19v14H1z" stroke="#111" strokeWidth="1.800" /><path d="M20 4h3v9.500c0 1.500-1 1.500-2 1.500h-3M4 5h6v6H4zM12 5h6M12 8h6M12 11h6" stroke="#111" strokeWidth="1.500" /></Ico>
        <Ico w={12} h={8} className="ml-[18px]"><path d="M.8 7L6 1.500 11.200 7" stroke="#111" strokeWidth="1.400" /></Ico>
        <Ico w={16} h={15} className="ml-[11px]">
          <path d="M.7 3.500h12.500v8H.7zM13 6h2v3" stroke="#111" strokeWidth="1.200" /><path d="M2 5h3v5H2z" fill="#111" />
          <circle cx="10.500" cy="10" r="4.800" fill="#13a10e" /><path d="M10.500 6.500c3 3 1.500 5.500 0 6-1.500-.5-3-3 0-6z" stroke="#fff" />
        </Ico>
        <Ico w={17} h={17} className="ml-[7px]">
          <circle cx="8" cy="8" r="7.200" stroke="#111" strokeWidth="1.200" /><ellipse cx="8" cy="8" rx="3.300" ry="7.200" stroke="#111" />
          <path d="M1.500 5h13M1.500 10.500h8M8 1v14" stroke="#111" /><circle cx="12.500" cy="12.500" r="4.500" fill="#eee" /><circle cx="12.500" cy="12.500" r="3" stroke="#111" strokeWidth="1.200" /><path d="M10.500 10.500l4 4" stroke="#111" />
        </Ico>
        <Ico w={18} h={14} className="ml-[7px]"><path d="M.7 4.500h2.500L7 1v12L3.200 9.500H.7zM9 4.500c1 1.500 1 3.500 0 5M11.500 2.500c2 2.500 2 6.500 0 9M14 1c2.800 3.500 2.800 8.500 0 12" stroke="#111" /></Ico>
        <span className="ml-[8px] w-[26px] text-[12px] tracking-[-0.5px]">ENG</span>
        <div className="ml-[7px] flex w-[64px] flex-col items-center text-[12px] leading-[18px] tracking-[-0.55px]">
          <span>13:09</span>
          <span>03/06/2024</span>
        </div>
        <div className="relative ml-[15px] mr-[10px] h-[26px] w-[26px]">
          <Ico w={18} h={18} className="mt-[3px]"><path d="M0 0h17v13H9l-5 4v-4H0z" fill="#000" /><path d="M3 4h11M3 7h11M3 10h7" stroke="#fff" /></Ico>
          <div className="absolute left-[7px] top-[11px] flex h-[17px] w-[17px] items-center justify-center rounded-full border border-[#777] bg-[#dcdcdc] text-[11px] font-semibold">8</div>
        </div>
        <div className="h-[40px] w-px bg-[#bbb]" />
        <div className="w-[4px]" />
      </div>
    </footer>
  );
}

export default function App() {
  return (
    <div className="h-[768px] w-[1366px] overflow-hidden bg-[#bfbab7] font-['Open_Sans','Noto_Sans',sans-serif]">
      <TitleBar />
      <Tabs />
      <Ribbon />
      <QuickAccess />
      <FormulaBar />
      <div className="flex h-[436px] overflow-hidden bg-[#666]">
        <Sheet />
        <VScroll />
      </div>
      <SheetTabs />
      <StatusBar />
      <Taskbar />
    </div>
  );
}
